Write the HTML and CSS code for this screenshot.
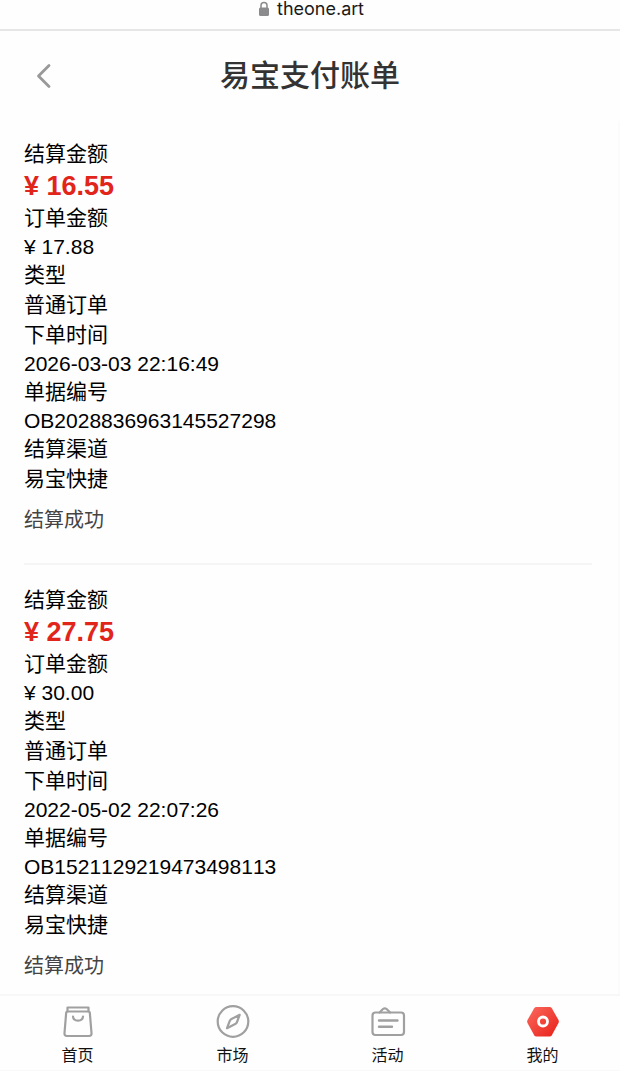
FILE: index.html
```html
<!DOCTYPE html>
<html lang="zh-CN">
<head>
  <meta charset="UTF-8">
  <meta name="viewport" content="width=device-width, initial-scale=1.0">
  <title>易宝支付账单</title>
  <link rel="stylesheet" href="styles.css">
</head>
<body>
  <div class="address-bar">
    <svg class="lock" width="12" height="16" viewBox="0 0 12 16">
      <path d="M3 7V4.500a3 3 0 0 1 6 0V7" fill="none" stroke="#8b8b8d" stroke-width="1.500"/>
      <rect x="1" y="6.500" width="10" height="8.500" rx="1.500" fill="#8b8b8d"/>
    </svg>
    <span>theone.art</span>
  </div>

  <header class="header">
    <button class="back" type="button" aria-label="返回">
      <svg width="18" height="28" viewBox="0 0 18 28">
        <path d="M15 3.500L4.500 14L15 24.500" fill="none" stroke="#999" stroke-width="2.800" stroke-linecap="round" stroke-linejoin="round"/>
      </svg>
    </button>
    <h1>易宝支付账单</h1>
  </header>

  <main class="bill-list">
    <section class="bill">
      <dl>
        <dt>结算金额</dt>
        <dd class="amount">¥ 16.55</dd>
        <dt>订单金额</dt>
        <dd class="num">¥ 17.88</dd>
        <dt>类型</dt>
        <dd>普通订单</dd>
        <dt>下单时间</dt>
        <dd class="num">2026-03-03 22:16:49</dd>
        <dt>单据编号</dt>
        <dd class="num">OB2028836963145527298</dd>
        <dt>结算渠道</dt>
        <dd>易宝快捷</dd>
      </dl>
      <p class="status">结算成功</p>
    </section>

    <section class="bill">
      <dl>
        <dt>结算金额</dt>
        <dd class="amount">¥ 27.75</dd>
        <dt>订单金额</dt>
        <dd class="num">¥ 30.00</dd>
        <dt>类型</dt>
        <dd>普通订单</dd>
        <dt>下单时间</dt>
        <dd class="num">2022-05-02 22:07:26</dd>
        <dt>单据编号</dt>
        <dd class="num">OB1521129219473498113</dd>
        <dt>结算渠道</dt>
        <dd>易宝快捷</dd>
      </dl>
      <p class="status">结算成功</p>
    </section>
  </main>

  <nav class="tab-bar">
    <a href="#home">
      <svg width="36" height="36" viewBox="0 0 36 36" fill="none" stroke="#a0a0a0" stroke-width="2.200" stroke-linecap="round" stroke-linejoin="round">
        <path d="M7.500 7.500V3.500h21v4"/>
        <path d="M7.500 7.500h21q1.200 0 1.300 1l1.700 20.500q.2 3-2.500 3h-22q-2.700 0-2.500-3l1.700-20.500q.1-1 1.300-1z"/>
        <path d="M13 12.500c.3 5.500 9.700 5.500 10 0"/>
      </svg>
      <span>首页</span>
    </a>
    <a href="#market">
      <svg width="36" height="36" viewBox="0 0 36 36" fill="none" stroke="#a0a0a0" stroke-width="2.200" stroke-linejoin="round">
        <circle cx="18" cy="17.500" r="15.300"/>
        <path d="M24.700 10.800l-2.700 7.200q-.4 1-1.300 1.700L12 24.200l2.700-7.200q.4-1 1.300-1.700z"/>
      </svg>
      <span>市场</span>
    </a>
    <a href="#activity">
      <svg width="36" height="36" viewBox="0 0 36 36" fill="none" stroke="#a0a0a0" stroke-width="2.200" stroke-linecap="round" stroke-linejoin="round">
        <path d="M9.500 8.500l3.500-3.500q1.800-1.400 3.600 0l3.500 3.500"/>
        <rect x="2.500" y="8.500" width="31.500" height="22.500" rx="3"/>
        <path d="M9 16.500h18.500M9 22.800h13" stroke-width="2.400"/>
      </svg>
      <span>活动</span>
    </a>
    <a href="#mine">
      <svg width="36" height="36" viewBox="0 0 36 36">
        <defs>
          <linearGradient id="mine" x1="0" y1="0" x2="1" y2="1">
            <stop offset="0" stop-color="#fb6a5f"/>
            <stop offset="1" stop-color="#e81f17"/>
          </linearGradient>
        </defs>
        <path d="M11.500 3h13q1.500 0 2.300 1.300L33.500 16q.7 1.500 0 3L26.800 31.200Q26 32.500 24.500 32.500h-13Q10 32.500 9.200 31.200L2.500 19q-.7-1.500 0-3L9.200 4.300Q10 3 11.500 3z" fill="url(#mine)"/>
        <circle cx="18" cy="17.500" r="4.500" fill="none" stroke="#fff" stroke-width="2.800"/>
      </svg>
      <span>我的</span>
    </a>
  </nav>
</body>
</html>
```

FILE: styles.css
```css
* {
  box-sizing: border-box;
}

body {
  display: flex;
  flex-direction: column;
  min-height: 100vh;
  margin: 0;
  font-family: "Liberation Sans", "Noto Sans CJK SC", sans-serif;
  font-size: 21px;
  line-height: 30px;
  font-kerning: none;
  color: #000;
  background-color: #fefefe;
}

.address-bar {
  display: flex;
  justify-content: center;
  align-items: center;
  gap: 7px;
  padding: 0 0 11px 2px;
  border-bottom: 2px solid #e6e6e6;
  font-family: Inter, sans-serif;
  font-size: 18px;
  line-height: 18px;
  color: #1a1a1a;
}

.header {
  display: grid;
  grid-template-columns: 60px 1fr 60px;
  align-items: center;
  height: 90px;
}

.back {
  justify-self: end;
  display: flex;
  padding: 0 8px;
  border: none;
  background: none;
  cursor: pointer;
}

h1 {
  margin: 0;
  font-size: 30px;
  line-height: 40px;
  font-weight: 500;
  text-align: center;
  color: #333;
}

.bill-list {
  flex: 1;
  padding: 0 26px 0 24px;
  border-right: 2px solid #fbfbfb;
}

.bill {
  padding: 18px 0 28px;
  border-bottom: 2px solid #f5f5f5;
}

.bill + .bill {
  padding-top: 20px;
}

.bill:last-child {
  padding-bottom: 13px;
  border-bottom: none;
}

dl,
dd {
  margin: 0;
}

.num {
  line-height: 27px;
}

.amount {
  font-size: 27px;
  line-height: 34px;
  font-weight: bold;
  color: #e1251b;
}

.status {
  margin: 11px 0 0;
  font-size: 20px;
  color: #444;
}

.tab-bar {
  display: flex;
  border-top: 2px solid #f7f7f7;
  border-bottom: 2px solid #f9f9f9;
}

.tab-bar a {
  flex: 1;
  display: flex;
  flex-direction: column;
  align-items: center;
  gap: 5px;
  padding: 8px 0 3px;
  font-size: 16px;
  line-height: 22px;
  color: #111;
  text-decoration: none;
}
```
